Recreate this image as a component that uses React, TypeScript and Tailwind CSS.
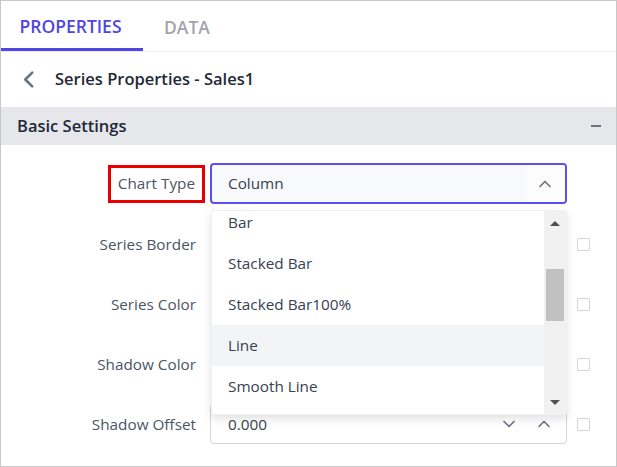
import React from 'react';

const Chevron: React.FC<{ dir: 'up' | 'down' | 'left'; className?: string; sw?: number }> = ({ dir, className, sw = 2 }) => {
  const d =
    dir === 'up' ? 'M2 9 L8 3 L14 9' : dir === 'down' ? 'M2 3 L8 9 L14 3' : 'M8.5 1.5 L2 8 L8.5 14.5';
  const vb = dir === 'left' ? '0 0 10 16' : '0 0 16 12';
  return (
    <svg viewBox={vb} className={className} fill="none" stroke="currentColor" strokeWidth={sw} strokeLinecap="round" strokeLinejoin="round">
      <path d={d} />
    </svg>
  );
};

const Checkbox = () => <div className="w-[13px] h-[13px] border border-[#d4d6da] bg-white rounded-[1px]" />;

const items = ['Bar', 'Stacked Bar', 'Stacked Bar100%', 'Line', 'Smooth Line'];

export default function App() {
  return (
    <div
      className="w-[617px] h-[467px] border border-[#c8c8c8] bg-white overflow-hidden flex flex-col"
      style={{ fontFamily: '"Open Sans", "Noto Sans", sans-serif' }}
    >
      {/* tabs */}
      <div className="h-[51px] flex items-end border-b border-[#ececec] shrink-0">
        <div className="w-[142px] h-full flex items-center justify-center border-b-[3px] border-[#5046e5] text-[#5046e5] text-[17.5px] font-semibold pt-[3px] pr-[3px]">
          PROPERTIES
        </div>
        <div className="h-full flex items-center px-[21px] text-[#a3a3ab] text-[17.5px] font-semibold pt-[3px]">DATA</div>
      </div>

      {/* breadcrumb header */}
      <div className="h-[55px] flex items-center pl-[22px] gap-[21px] shrink-0">
        <Chevron dir="left" sw={2.4} className="w-[11px] h-[17px] text-[#6b7280]" />
        <span className="text-[16.5px] font-semibold text-[#1f2937]">Series Properties - Sales1</span>
      </div>

      {/* section */}
      <div className="h-[38px] bg-[#e5e7eb] flex items-center justify-between pl-[16px] pr-[15px] shrink-0">
        <span className="text-[16.5px] font-semibold text-[#1f2937]">Basic Settings</span>
        <div className="w-[10px] h-[1.5px] bg-[#6b7280]" />
      </div>

      {/* form */}
      <div className="flex flex-col gap-[20px] pt-[18px] text-[15.3px]">
        <div className="h-[41px] flex items-center">
          <div className="w-[204px] flex justify-end">
            <span className="h-[38px] flex items-center border-[3px] border-[#e60000] px-[7px] text-[#4b5563]">Chart Type</span>
          </div>
          <div className="relative w-[357px] h-[41px] ml-[5px]">
            <div className="h-full rounded-[4px] border-2 border-[#5b4ff0] bg-[#f8f9fb] flex items-center overflow-hidden">
              <span className="flex-1 pl-[16px] text-[#374151]">Column</span>
              <div className="w-[38px] h-full bg-[#fcfcfd] flex items-center justify-center pr-[2px]">
                <Chevron dir="up" className="w-[14px] h-[10px] text-[#6b7280]" />
              </div>
            </div>

            {/* popup */}
            <div className="absolute top-[47px] left-[1px] right-0 h-[205px] bg-white rounded-[3px] shadow-[0_4px_10px_rgba(0,0,0,0.12)] border border-[#f0f0f0] flex overflow-hidden z-10">
              <div className="flex-1 overflow-hidden">
                <div className="mt-[-9px]">
                  {items.map((it) => (
                    <div
                      key={it}
                      className={`h-[41px] flex items-center pl-[16px] text-[#374151] ${it === 'Line' ? 'bg-[#f3f4f6]' : ''}`}
                    >
                      {it}
                    </div>
                  ))}
                </div>
              </div>
              <div className="w-[22px] bg-[#f1f1f1] flex flex-col items-center">
                <div className="h-[24px] flex items-center justify-center">
                  <div className="w-0 h-0 border-l-[5px] border-r-[5px] border-b-[5px] border-l-transparent border-r-transparent border-b-[#505050]" />
                </div>
                <div className="flex-1 w-full px-[2px]">
                  <div className="mt-[34px] h-[52px] bg-[#c1c1c1]" />
                </div>
                <div className="h-[24px] flex items-center justify-center">
                  <div className="w-0 h-0 border-l-[5px] border-r-[5px] border-t-[5px] border-l-transparent border-r-transparent border-t-[#505050]" />
                </div>
              </div>
            </div>
          </div>
        </div>

        {['Series Border', 'Series Color', 'Shadow Color'].map((label) => (
          <div key={label} className="h-[40px] flex items-center">
            <div className="w-[195px] text-right text-[#4b5563]">{label}</div>
            <div className="w-[357px] ml-[14px]" />
            <div className="ml-[10px]">
              <Checkbox />
            </div>
          </div>
        ))}

        <div className="h-[40px] flex items-center">
          <div className="w-[195px] text-right text-[#4b5563]">Shadow Offset</div>
          <div className="w-[357px] h-[40px] ml-[14px] rounded-[4px] border border-[#d1d5db] flex items-center">
            <span className="flex-1 pl-[17px] text-[#374151]">0.000</span>
            <Chevron dir="down" className="w-[14px] h-[10px] text-[#6b7280]" />
            <Chevron dir="up" className="w-[14px] h-[10px] text-[#6b7280] ml-[21px] mr-[15px]" />
          </div>
          <div className="ml-[10px]">
            <Checkbox />
          </div>
        </div>
      </div>
    </div>
  );
}
